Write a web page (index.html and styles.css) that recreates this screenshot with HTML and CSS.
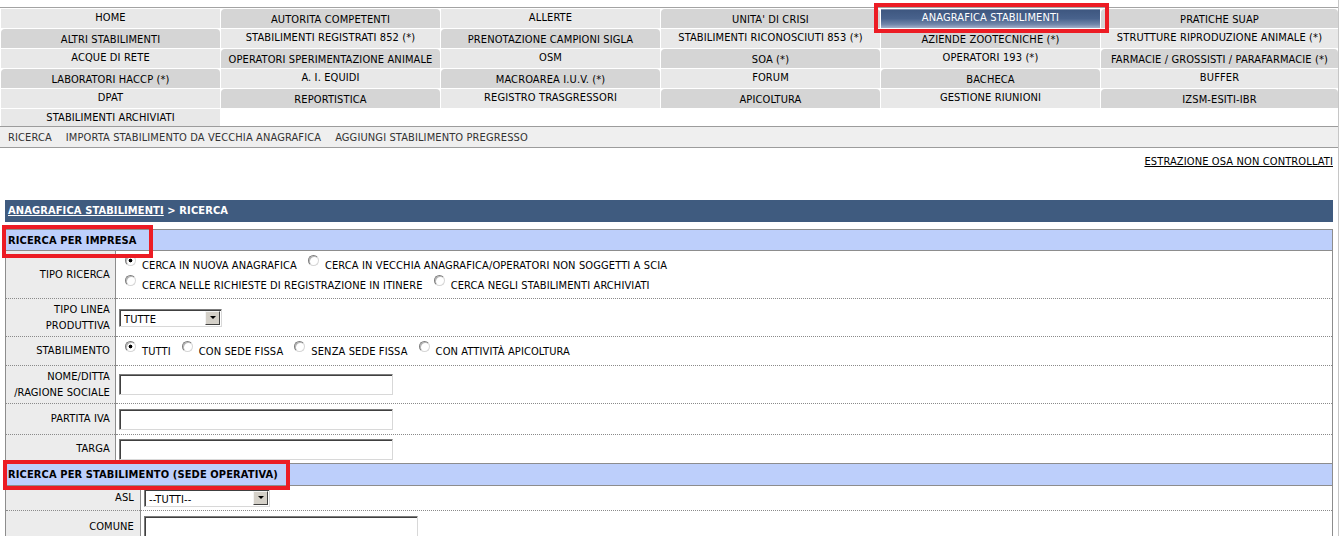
FILE: index.html
```html
<!DOCTYPE html>
<html lang="it">
<head>
<meta charset="utf-8">
<title>Anagrafica Stabilimenti - Ricerca</title>
<link rel="stylesheet" href="styles.css">
</head>
<body>
<div class="page">
  <nav class="menu">
    <a class="tab lt" href="#">HOME</a>
    <a class="tab dk" href="#">AUTORITA COMPETENTI</a>
    <a class="tab lt" href="#">ALLERTE</a>
    <a class="tab dk" href="#">UNITA' DI CRISI</a>
    <a class="tab cur" href="#">ANAGRAFICA STABILIMENTI</a>
    <a class="tab dk" href="#">PRATICHE SUAP</a>

    <a class="tab dk" href="#">ALTRI STABILIMENTI</a>
    <a class="tab lt" href="#">STABILIMENTI REGISTRATI 852 (*)</a>
    <a class="tab dk" href="#">PRENOTAZIONE CAMPIONI SIGLA</a>
    <a class="tab lt" href="#">STABILIMENTI RICONOSCIUTI 853 (*)</a>
    <a class="tab dk" href="#">AZIENDE ZOOTECNICHE (*)</a>
    <a class="tab lt" href="#">STRUTTURE RIPRODUZIONE ANIMALE (*)</a>

    <a class="tab lt" href="#">ACQUE DI RETE</a>
    <a class="tab dk" href="#">OPERATORI SPERIMENTAZIONE ANIMALE</a>
    <a class="tab lt" href="#">OSM</a>
    <a class="tab dk" href="#">SOA (*)</a>
    <a class="tab lt" href="#">OPERATORI 193 (*)</a>
    <a class="tab dk" href="#">FARMACIE / GROSSISTI / PARAFARMACIE (*)</a>

    <a class="tab dk" href="#">LABORATORI HACCP (*)</a>
    <a class="tab lt" href="#">A. I. EQUIDI</a>
    <a class="tab dk" href="#">MACROAREA I.U.V. (*)</a>
    <a class="tab lt" href="#">FORUM</a>
    <a class="tab dk" href="#">BACHECA</a>
    <a class="tab lt" href="#">BUFFER</a>

    <a class="tab lt" href="#">DPAT</a>
    <a class="tab dk" href="#">REPORTISTICA</a>
    <a class="tab lt" href="#">REGISTRO TRASGRESSORI</a>
    <a class="tab dk" href="#">APICOLTURA</a>
    <a class="tab lt" href="#">GESTIONE RIUNIONI</a>
    <a class="tab dk" href="#">IZSM-ESITI-IBR</a>

    <a class="tab lt" href="#">STABILIMENTI ARCHIVIATI</a>
  </nav>

  <div class="submenu">
    <a href="#">RICERCA</a>
    <a href="#">IMPORTA STABILIMENTO DA VECCHIA ANAGRAFICA</a>
    <a href="#">AGGIUNGI STABILIMENTO PREGRESSO</a>
  </div>

  <div class="tools">
    <a href="#">ESTRAZIONE OSA NON CONTROLLATI</a>
  </div>

  <div class="crumb"><a href="#">ANAGRAFICA STABILIMENTI</a> &gt; RICERCA</div>

  <table class="form f1">
    <tr class="hd"><td colspan="2">RICERCA PER IMPRESA</td></tr>
    <tr class="r-tipo">
      <td class="lab">TIPO RICERCA</td>
      <td class="val">
        <div class="line">
          <label class="opt"><input type="radio" name="tipo" checked>CERCA IN NUOVA ANAGRAFICA</label>
          <label class="opt"><input type="radio" name="tipo">CERCA IN VECCHIA ANAGRAFICA/OPERATORI NON SOGGETTI A SCIA</label>
        </div>
        <div class="line">
          <label class="opt"><input type="radio" name="tipo">CERCA NELLE RICHIESTE DI REGISTRAZIONE IN ITINERE</label>
          <label class="opt"><input type="radio" name="tipo">CERCA NEGLI STABILIMENTI ARCHIVIATI</label>
        </div>
      </td>
    </tr>
    <tr class="r-linea">
      <td class="lab">TIPO LINEA<br>PRODUTTIVA</td>
      <td class="val">
        <span class="dd dd-s"><select><option>TUTTE</option></select><span class="arr"></span></span>
      </td>
    </tr>
    <tr class="r-stab">
      <td class="lab">STABILIMENTO</td>
      <td class="val">
        <div class="line">
          <label class="opt"><input type="radio" name="stab" checked>TUTTI</label>
          <label class="opt"><input type="radio" name="stab">CON SEDE FISSA</label>
          <label class="opt"><input type="radio" name="stab">SENZA SEDE FISSA</label>
          <label class="opt"><input type="radio" name="stab">CON ATTIVITÀ APICOLTURA</label>
        </div>
      </td>
    </tr>
    <tr class="r-nome">
      <td class="lab">NOME/DITTA<br>/RAGIONE SOCIALE</td>
      <td class="val"><input class="txt" type="text"></td>
    </tr>
    <tr class="r-piva">
      <td class="lab">PARTITA IVA</td>
      <td class="val"><input class="txt" type="text"></td>
    </tr>
    <tr class="r-targa">
      <td class="lab">TARGA</td>
      <td class="val"><input class="txt" type="text"></td>
    </tr>
  </table>

  <table class="form f2">
    <tr class="hd"><td colspan="2">RICERCA PER STABILIMENTO (SEDE OPERATIVA)</td></tr>
    <tr class="r-asl">
      <td class="lab">ASL</td>
      <td class="val">
        <span class="dd dd-l"><select><option>--TUTTI--</option></select><span class="arr"></span></span>
      </td>
    </tr>
    <tr class="r-comune">
      <td class="lab">COMUNE</td>
      <td class="val"><input class="txt" type="text"></td>
    </tr>
  </table>

  <div class="mark m1"></div>
  <div class="mark m2"></div>
  <div class="mark m3"></div>
</div>
</body>
</html>
```
FILE: styles.css
```css
* { box-sizing: border-box; }

html, body { margin: 0; padding: 0; background: #fff; }

body {
  font-family: "DejaVu Sans Condensed", "DejaVu Sans", Tahoma, sans-serif;
  font-size: 11px;
  letter-spacing: 0.12px;
  color: #000;
  overflow: hidden;
}

.page {
  position: relative;
  width: 1339px;
  min-height: 536px;
  padding-top: 7px;
  border-right: 1px solid #c6c6c6;
}

/* ---------- top menu ---------- */
.menu {
  border-top: 1px solid #a3a3a3;
  padding: 1px 0 0 1px;
  display: grid;
  grid-template-columns: repeat(5, 219px) 1fr;
  grid-template-rows: repeat(5, 19px) 17px;
  gap: 1px;
}

.tab {
  display: block;
  text-align: center;
  color: #000;
  text-decoration: none;
  line-height: 13px;
  white-space: nowrap;
  overflow: hidden;
}

.tab.lt { background: #e8e8e8; padding-top: 2px; }
.tab.dk { background: #d5d5d5; padding-top: 4px; border-radius: 4px 4px 0 0; }
.tab.cur {
  padding-top: 2px;
  color: #fff;
  background: linear-gradient(#3d567f 0%, #48628c 50%, #6f84a8 80%, #a3b1cc 100%);
  box-shadow: inset 0 1px #7d8fb0;
}

/* ---------- sub menu ---------- */
.submenu {
  height: 22px;
  border-top: 1px solid #9c9c9c;
  border-bottom: 1px solid #9c9c9c;
  background: #efefef;
  padding: 0 8px;
  display: flex;
  align-items: center;
  gap: 14px;
}
.submenu a { color: #333; text-decoration: none; }

/* ---------- tools ---------- */
.tools {
  height: 52px;
  padding: 7px 5px 0 0;
  text-align: right;
  line-height: 13px;
}
.tools a { color: #000; text-decoration: underline; }

/* ---------- breadcrumb ---------- */
.crumb {
  margin: 0 5px;
  height: 22px;
  line-height: 22px;
  padding-left: 3px;
  background: #3f5b7f;
  color: #fff;
  font-weight: bold;
}
.crumb a { color: #fff; text-decoration: underline; }

/* ---------- form tables ---------- */
.form {
  width: 1328px;
  margin: 0 5px;
  border-collapse: collapse;
  border: 1px solid #8d8d8d;
}
.f1 { margin-top: 7px; }
.f2 { border-top: 0; }

.form td { padding: 0; vertical-align: middle; }

.form .hd td {
  height: 21px;
  padding-left: 2px;
  background: #bdcffb;
  font-weight: bold;
  border-bottom: 1px solid #8d8d8d;
  line-height: 14px;
  padding-top: 1px;
}

.form tr + tr:not(.hd) td { border-top: 1px dotted #8a8a8a; }
.form tr.hd + tr td { border-top: 1px solid #8d8d8d; }

.lab {
  background: #ececec;
  text-align: right;
  padding-right: 5px !important;
  border-right: 1px solid #8d8d8d;
  line-height: 16px;
}
.f1 .lab { width: 110px; }
.f2 .lab { width: 135px; padding-right: 6px !important; }

.val { padding-left: 3px !important; line-height: 18px; }

.r-tipo td { height: 48px; }
.r-linea td { height: 38px; }
.r-stab td { height: 29px; }
.r-nome td { height: 38px; }
.r-piva td { height: 31px; }
.r-targa td { height: 29px; }
.r-asl td { height: 25px; }
.r-comune td { height: 33px; }

.line {
  display: flex;
  align-items: baseline;
  white-space: nowrap;
}

.opt { white-space: nowrap; margin-right: 5px; }

.opt input {
  -webkit-appearance: none;
  appearance: none;
  width: 11px;
  height: 11px;
  margin: 0 6px 0 6px;
  border-radius: 50%;
  border: 1px solid;
  border-color: #7d7d7d #d6d6d6 #d6d6d6 #7d7d7d;
  background: #fff;
  vertical-align: 3px;
  box-shadow: inset 1px 1px #b8b8b8;
}
.opt input:checked {
  background: radial-gradient(circle, #000 0, #000 1.6px, #fff 2.2px);
}

/* select */
.dd {
  display: inline-flex;
  height: 18px;
  vertical-align: middle;
  border: 1px solid;
  border-color: #7b7b7b #d8d8d8 #d8d8d8 #7b7b7b;
  box-shadow: inset 1px 1px #404040;
  background: #fff;
}
.dd-s { width: 103px; }
.dd-l { width: 126px; }
.dd select {
  -webkit-appearance: none;
  appearance: none;
  flex: 1;
  min-width: 0;
  border: 0;
  background: transparent;
  font: inherit;
  letter-spacing: inherit;
  color: #000;
  padding: 0 0 0 3px;
  margin: 1px 0 0 1px;
  outline: none;
}
.arr {
  width: 15px;
  margin: 1px 1px 1px 0;
  background: #d4d0c8;
  border: 1px solid;
  border-color: #f4f4f4 #404040 #404040 #f4f4f4;
  display: flex;
  align-items: center;
  justify-content: center;
}
.arr::after {
  content: "";
  border-left: 3px solid transparent;
  border-right: 3px solid transparent;
  border-top: 3px solid #000;
}

/* text input */
.txt {
  width: 274px;
  height: 21px;
  vertical-align: middle;
  border: 1px solid;
  border-color: #7b7b7b #d8d8d8 #d8d8d8 #7b7b7b;
  box-shadow: inset 1px 1px #404040;
  background: #fff;
  font: inherit;
  padding: 0 3px;
  margin: 0;
}

/* ---------- annotation marks ---------- */
.mark {
  position: absolute;
  border: 4px solid #ec1c24;
  pointer-events: none;
}
.m1 { left: 874px; top: 3px; width: 235px; height: 30px; }
.m2 { left: 2px; top: 225px; width: 151px; height: 33px; }
.m3 { left: 3px; top: 460px; width: 287px; height: 30px; }
```
